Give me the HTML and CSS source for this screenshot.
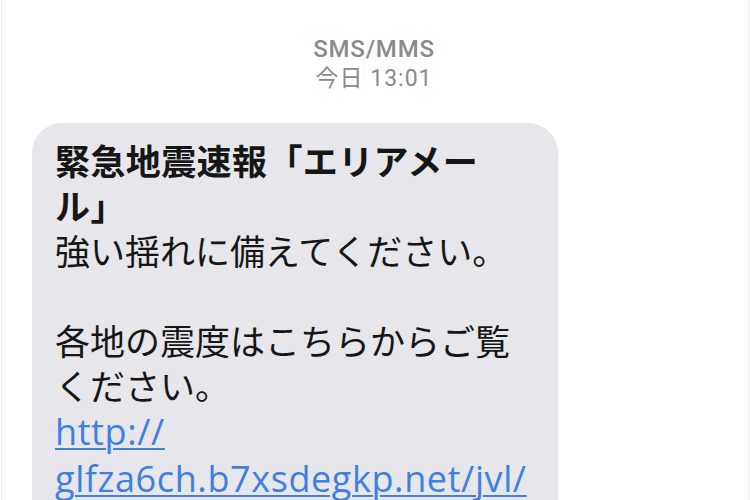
FILE: index.html
```html
<!DOCTYPE html>
<html lang="ja">
<head>
<meta charset="utf-8">
<title>SMS/MMS</title>
<link rel="stylesheet" href="styles.css">
</head>
<body>
<div class="screen">
  <header class="thread-head">
    <div class="service">SMS/MMS</div>
    <div class="time">今日 13:01</div>
  </header>
  <div class="bubble">
    <p class="title">緊急地震速報「エリアメール」</p>
    <p class="body">強い揺れに備えてください。</p>
    <p class="body gap">各地の震度はこちらからご覧ください。</p>
    <p class="body"><a class="link" href="#">http://<br>glfza6ch.b7xsdegkp.net/jvl/</a></p>
  </div>
</div>
</body>
</html>
```

FILE: styles.css
```css
html, body {
  margin: 0;
  padding: 0;
  background: #ffffff;
}
body {
  width: 750px;
  height: 500px;
  overflow: hidden;
  font-family: "Noto Sans CJK JP", "Noto Sans", sans-serif;
}
.screen {
  box-sizing: border-box;
  height: 500px;
  overflow: hidden;
  margin: 0 1px;
  border-left: 1px solid #ececec;
  border-right: 1px solid #ececec;
  padding-top: 34px;
}
.thread-head {
  text-align: center;
  color: #8a8a8e;
  padding-right: 2px;
}
.service {
  font-family: "Roboto", "Noto Sans", sans-serif;
  font-size: 24px;
  font-weight: 500;
  line-height: 30px;
  letter-spacing: 0.8px;
}
.time {
  font-family: "Roboto", "Noto Sans CJK JP", sans-serif;
  font-size: 23px;
  line-height: 30px;
  letter-spacing: 1px;
}
.bubble {
  box-sizing: border-box;
  width: 526px;
  margin: 29px 0 0 30px;
  padding: 14px 24px 40px 23px;
  background: #e6e6eb;
  border-radius: 30px;
  color: #161616;
  font-size: 35px;
  line-height: 45px;
  text-spacing-trim: space-all;
}
.bubble p {
  margin: 0;
}
.title {
  font-weight: 700;
  letter-spacing: 0.4px;
}
.gap {
  margin-top: 45px !important;
}
.link {
  color: #3f7fdf;
  text-decoration: underline;
  text-decoration-thickness: 2px;
  text-underline-offset: 3px;
  font-family: "Open Sans", "Noto Sans", sans-serif;
  font-size: 36px;
  letter-spacing: 0.6px;
}
```
